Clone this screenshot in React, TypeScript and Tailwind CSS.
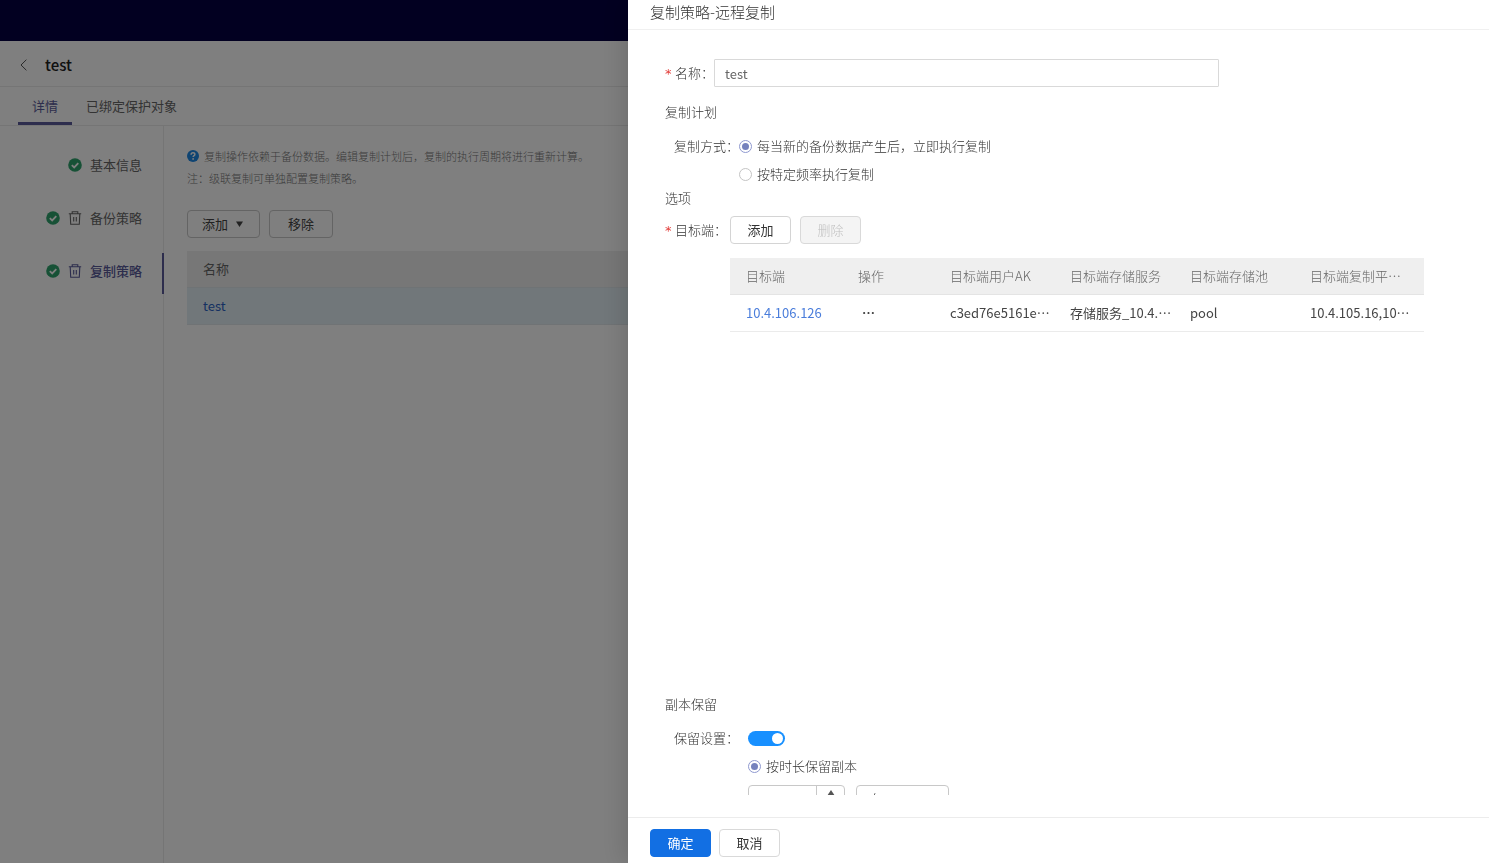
import { useState } from "react";

interface NavItem {
    label: string;
    removable: boolean;
    active?: boolean;
}

const navItems: NavItem[] = [
    { label: "基本信息", removable: false },
    { label: "备份策略", removable: true },
    { label: "复制策略", removable: true, active: true },
];

const targetColumns = [
    { title: "目标端", width: "w-[112px]" },
    { title: "操作", width: "w-[92px]" },
    { title: "目标端用户AK", width: "w-[120px]" },
    { title: "目标端存储服务", width: "w-[120px]" },
    { title: "目标端存储池", width: "w-[120px]" },
    { title: "目标端复制平…", width: "" },
];

const buttonClass = "h-7 rounded-[4px] border text-[13px] leading-5";
const radioClass =
    "m-0 h-[13px] w-[13px] shrink-0 appearance-none rounded-full border border-[#c4c4c4] bg-white bg-clip-content p-[2px] checked:border-[#8f99d0] checked:bg-[#7682bd]";

const CheckIcon = () => (
    <svg viewBox="0 0 14 14" className="h-[14px] w-[14px] shrink-0" aria-hidden="true">
        <circle cx="7" cy="7" r="6.8" fill="#2ea36c" />
        <path d="M3.8 7.1l2.4 2.3L10.3 5.2" fill="none" stroke="#fff" strokeWidth="1.8" />
    </svg>
);

const TrashIcon = () => (
    <svg viewBox="0 0 14 14" className="h-[14px] w-[14px] shrink-0" fill="none" stroke="currentColor" aria-hidden="true">
        <path d="M.8 2.7h12.4M4.2 2.5V.7h5.6v1.8M2.2 2.9l.5 10.3h8.6l.5-10.3M5.7 6v4.6M8.3 6v4.6" strokeWidth="1.1" />
    </svg>
);

const QuestionIcon = () => (
    <svg viewBox="0 0 12 12" className="h-3 w-3 shrink-0" aria-hidden="true">
        <circle cx="6" cy="6" r="6" fill="#1e88e5" />
        <path d="M4.1 4.7c0-1.2.8-1.9 1.9-1.9s1.9.7 1.9 1.7c0 1.2-1.8 1.2-1.8 2.6" fill="none" stroke="#fff" strokeWidth="1.4" />
        <circle cx="6.1" cy="8.9" r=".9" fill="#fff" />
    </svg>
);

const Required = () => (
    <span className="w-[10px] pt-[2px] font-['DejaVu_Sans',sans-serif] font-normal text-[#e23c39]">*</span>
);

const PolicyPage = () => (
    <div className="flex min-h-screen flex-col bg-white">
        <header className="h-[41px] bg-[#050042]" />
        <div className="flex h-[46px] items-center border-b border-[#eaeaea] px-5 pt-[3px]">
            <button type="button" aria-label="返回" className="text-[#555]">
                <svg viewBox="0 0 7 12" className="h-3 w-[7px]" fill="none" stroke="currentColor">
                    <path d="M6.4.7L1 6l5.4 5.3" />
                </svg>
            </button>
            <h1 className="ml-[18px] text-[15px] font-medium text-[#222]">test</h1>
        </div>
        <nav className="flex h-[39px] border-b border-[#eaeaea] pl-[18px] text-[13px] text-[#666]">
            <a href="#detail" className="flex items-center border-b-[3px] border-[#5a5b9a] px-[14px] pt-[3px] text-[#5a5b9a]">
                详情
            </a>
            <a href="#objects" className="flex items-center px-[14px]">
                已绑定保护对象
            </a>
        </nav>
        <div className="flex flex-1">
            <aside className="flex w-[164px] shrink-0 flex-col gap-3 border-r border-[#eaeaea] pt-[21px] text-[13px]">
                {navItems.map((item) => (
                    <a
                        key={item.label}
                        href="#section"
                        className={`-mr-px flex h-[41px] items-center justify-end border-r-2 pr-5 pb-[6px] ${
                            item.active ? "border-[#5a5b9a] font-medium text-[#5a5b9a]" : "border-transparent text-[#666]"
                        }`}
                    >
                        <CheckIcon />
                        {item.removable && (
                            <span className="ml-2 flex">
                                <TrashIcon />
                            </span>
                        )}
                        <span className="ml-2">{item.label}</span>
                    </a>
                ))}
            </aside>
            <main className="flex-1 pt-[19px] pl-[23px]">
                <div className="text-[11px] leading-[22px] font-light text-[#777]">
                    <p className="flex items-center gap-[5px]">
                        <QuestionIcon />
                        复制操作依赖于备份数据。编辑复制计划后，复制的执行周期将进行重新计算。
                    </p>
                    <p>注：级联复制可单独配置复制策略。</p>
                </div>
                <div className="mt-[21px] flex gap-[9px] text-[#444]">
                    <button type="button" className={`${buttonClass} flex items-center gap-2 border-[#c8c8c8] pr-4 pl-[14px]`}>
                        添加
                        <svg viewBox="0 0 7 6" className="h-1.5 w-[7px]" aria-hidden="true">
                            <path d="M0 .5h7L3.5 6z" fill="currentColor" />
                        </svg>
                    </button>
                    <button type="button" className={`${buttonClass} border-[#c8c8c8] px-[18px]`}>
                        移除
                    </button>
                </div>
                <table className="mt-[13px] w-full text-left text-[13px]">
                    <thead>
                        <tr className="h-9 border-b border-[#dfe6ea] bg-[#efefef]">
                            <th className="px-4 font-normal text-[#666]">名称</th>
                        </tr>
                    </thead>
                    <tbody>
                        <tr className="h-[37px] border-b border-[#e0e6ea] bg-[#e3eff5]">
                            <td className="px-4">
                                <a href="#test" className="text-[#2a62c4]">
                                    test
                                </a>
                            </td>
                        </tr>
                    </tbody>
                </table>
            </main>
        </div>
    </div>
);

const TargetTable = () => (
    <table className="w-full table-fixed text-left text-[13px]">
        <thead>
            <tr className="h-9 border-b border-[#e4e4e4] bg-[#efefef] text-[#666]">
                {targetColumns.map((column) => (
                    <th key={column.title} className={`pl-4 font-light whitespace-nowrap ${column.width}`}>
                        {column.title}
                    </th>
                ))}
            </tr>
        </thead>
        <tbody>
            <tr className="h-[37px] border-b border-[#ebebeb] whitespace-nowrap text-[#444]">
                <td className="pl-4">
                    <a href="#target" className="text-[#4a7ddb]">
                        10.4.106.126
                    </a>
                </td>
                <td className="pl-5">
                    <button type="button" aria-label="更多操作" className="font-bold">
                        …
                    </button>
                </td>
                <td className="pl-4">c3ed76e5161e…</td>
                <td className="pl-4">存储服务_10.4.…</td>
                <td className="pl-4">pool</td>
                <td className="pl-4">10.4.105.16,10…</td>
            </tr>
        </tbody>
    </table>
);

const ReplicationDrawer = () => {
    const [name, setName] = useState("test");
    const [mode, setMode] = useState("immediate");
    const [keep, setKeep] = useState(true);
    const [duration, setDuration] = useState("");

    return (
        <section className="fixed inset-y-0 right-0 flex w-[861px] max-w-full flex-col bg-white text-[13px] font-light text-[#333] shadow-[-4px_0_24px_rgba(0,0,0,0.15)]">
            <header className="h-[30px] shrink-0 border-b border-[#f0f0f0] px-[22px]">
                <h2 className="text-[15px] leading-6">复制策略-远程复制</h2>
            </header>
            <form id="policy" className="min-h-0 flex-1 overflow-y-auto pt-[29px] pr-[65px] pl-[37px] [scrollbar-width:none]">
                <div className="flex items-center">
                    <Required />
                    <label htmlFor="name">名称：</label>
                    <input
                        id="name"
                        value={name}
                        onChange={(e) => setName(e.target.value)}
                        className="h-7 w-[505px] rounded-[1px] border border-[#d9d9d9] px-[10px] font-normal text-[#666] outline-none"
                    />
                </div>
                <h3 className="mt-[15px] leading-5">复制计划</h3>
                <div className="mt-[10px] flex pl-[9px] leading-7">
                    <span id="mode-label">复制方式：</span>
                    <div role="radiogroup" aria-labelledby="mode-label">
                        <label className="flex items-center gap-[5px]">
                            <input
                                type="radio"
                                name="mode"
                                checked={mode === "immediate"}
                                onChange={() => setMode("immediate")}
                                className={radioClass}
                            />
                            每当新的备份数据产生后，立即执行复制
                        </label>
                        <label className="flex items-center gap-[5px]">
                            <input
                                type="radio"
                                name="mode"
                                checked={mode === "schedule"}
                                onChange={() => setMode("schedule")}
                                className={radioClass}
                            />
                            按特定频率执行复制
                        </label>
                    </div>
                </div>
                <h3 className="leading-5">选项</h3>
                <div className="mt-2 flex items-center">
                    <Required />
                    <span className="w-[55px]">目标端：</span>
                    <button type="button" className={`${buttonClass} w-[61px] border-[#d4d4d4] font-normal`}>
                        添加
                    </button>
                    <button
                        type="button"
                        disabled
                        className={`${buttonClass} ml-[9px] w-[61px] border-[#d9d9d9] bg-[#f4f4f4] text-[#bfbfbf]`}
                    >
                        删除
                    </button>
                </div>
                <div className="mt-[14px] h-[436px] pl-[65px] font-normal">
                    <TargetTable />
                </div>
                <h3 className="leading-5">副本保留</h3>
                <div className="mt-[10px] flex items-center pl-[9px] leading-7">
                    <label htmlFor="keep" className="w-[74px]">
                        保留设置：
                    </label>
                    <input
                        id="keep"
                        type="checkbox"
                        role="switch"
                        checked={keep}
                        onChange={(e) => setKeep(e.target.checked)}
                        className="flex h-[15px] w-[37px] appearance-none items-center rounded-full bg-[#bfbfbf] px-[2px] before:h-[11px] before:w-[11px] before:rounded-full before:bg-white checked:justify-end checked:bg-[#1890ff]"
                    />
                </div>
                <div className="pl-[83px]">
                    <label className="flex items-center gap-[5px] leading-7">
                        <input type="radio" name="retention" defaultChecked className={radioClass} />
                        按时长保留副本
                    </label>
                    <div className="mt-[5px] flex gap-[11px]">
                        <div className="flex h-7 w-[97px] rounded-[4px] border border-[#c8c8c8]">
                            <input
                                aria-label="保留时长"
                                value={duration}
                                onChange={(e) => setDuration(e.target.value)}
                                className="min-w-0 flex-1 px-3 outline-none"
                            />
                            <div className="flex w-7 flex-col items-center justify-between border-l border-[#c8c8c8] py-1">
                                <button type="button" aria-label="增加">
                                    <svg viewBox="0 0 8 6" className="block h-1.5 w-2">
                                        <path d="M4 0l4 6H0z" fill="#555" />
                                    </svg>
                                </button>
                                <button type="button" aria-label="减少">
                                    <svg viewBox="0 0 8 6" className="block h-1.5 w-2">
                                        <path d="M4 6l4-6H0z" fill="#555" />
                                    </svg>
                                </button>
                            </div>
                        </div>
                        <select
                            aria-label="时长单位"
                            defaultValue="年"
                            className="h-7 w-[93px] appearance-none rounded-[4px] border border-[#c8c8c8] px-[14px]"
                        >
                            <option>天</option>
                            <option>月</option>
                            <option>年</option>
                        </select>
                    </div>
                </div>
            </form>
            <footer className="mt-[22px] flex shrink-0 gap-2 border-t border-[#ececec] px-[22px] pt-[11px] pb-[6px] font-normal">
                <button type="submit" form="policy" className={`${buttonClass} w-[61px] border-[#126fe3] bg-[#126fe3] text-white`}>
                    确定
                </button>
                <button type="button" className={`${buttonClass} w-[61px] border-[#d9d9d9]`}>
                    取消
                </button>
            </footer>
        </section>
    );
};

export default function App() {
    return (
        <div lang="zh-CN" className="font-['Noto_Sans_CJK_SC',sans-serif]">
            <PolicyPage />
            <div className="fixed inset-0 bg-black/50" />
            <ReplicationDrawer />
        </div>
    );
}
